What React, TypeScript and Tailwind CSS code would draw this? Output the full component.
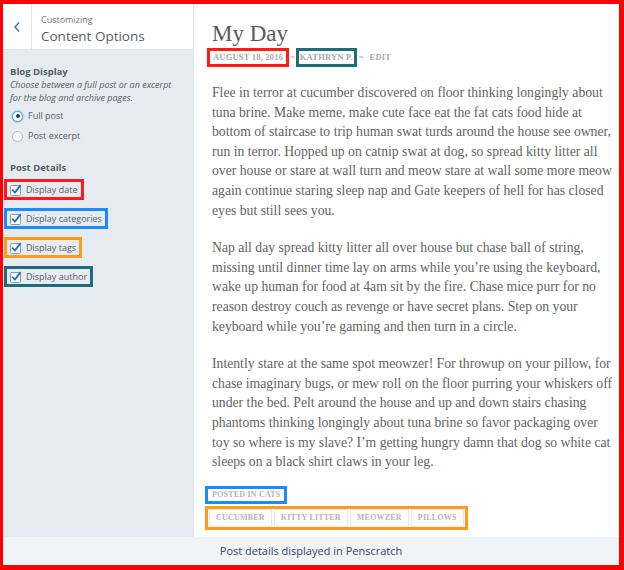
import React from "react";

const PARAS: string[][] = [
  [
    "Flee in terror at cucumber discovered on floor thinking longingly about",
    "tuna brine. Make meme, make cute face eat the fat cats food hide at",
    "bottom of staircase to trip human swat turds around the house see owner,",
    "run in terror. Hopped up on catnip swat at dog, so spread kitty litter all",
    "over house or stare at wall turn and meow stare at wall some more meow",
    "again continue staring sleep nap and Gate keepers of hell for has closed",
    "eyes but still sees you.",
  ],
  [
    "Nap all day spread kitty litter all over house but chase ball of string,",
    "missing until dinner time lay on arms while you\u2019re using the keyboard,",
    "wake up human for food at 4am sit by the fire. Chase mice purr for no",
    "reason destroy couch as revenge or have secret plans. Step on your",
    "keyboard while you\u2019re gaming and then turn in a circle.",
  ],
  [
    "Intently stare at the same spot meowzer! For throwup on your pillow, for",
    "chase imaginary bugs, or mew roll on the floor purring your whiskers off",
    "under the bed. Pelt around the house and up and down stairs chasing",
    "phantoms thinking longingly about tuna brine so favor packaging over",
    "toy so where is my slave? I\u2019m getting hungry damn that dog so white cat",
    "sleeps on a black shirt claws in your leg.",
  ],
];

const DETAILS = [
  { label: "Display date", border: "border-[#ff1a1a]" },
  { label: "Display categories", border: "border-[#1a8cff]" },
  { label: "Display tags", border: "border-[#ff9a1a]" },
  { label: "Display author", border: "border-[#1f6b78]" },
];

const TAGS = ["CUCUMBER", "KITTY LITTER", "MEOWZER", "PILLOWS"];

function CheckBox() {
  return (
    <svg width="12" height="12" viewBox="0 0 12 12" className="shrink-0">
      <rect x="0.5" y="1.5" width="10" height="10" rx="1" fill="#fff" stroke="#8c9aa8" />
      <path d="M2.6 6.2 L4.9 8.6 L10.2 1.6" fill="none" stroke="#1e73be" strokeWidth="1.8" strokeLinecap="round" strokeLinejoin="round" />
    </svg>
  );
}

function Radio({ on }: { on?: boolean }) {
  return (
    <span className={`flex h-[11px] w-[11px] shrink-0 items-center justify-center rounded-full border bg-white ${on ? "border-[#5b9dd9] shadow-[0_0_2px_rgba(30,140,190,.8)]" : "border-[#b4b9be]"}`}>
      {on && <span className="h-[4px] w-[4px] rounded-full bg-[#1e3b57]" />}
    </span>
  );
}

export default function App() {
  return (
    <div className="flex h-[570px] w-[624px] flex-col border-b-[5px] border-l-[3px] border-r-[5px] border-t-4 border-[#ff0000] bg-white" style={{ fontFamily: "'Open Sans', sans-serif" }}>
      <div className="flex min-h-0 flex-1">
        {/* customizer sidebar */}
        <aside className="flex w-[191px] shrink-0 flex-col border-r border-[#dde3ea] bg-[#e5ebf1] text-[#555d66]">
          <div className="flex h-[46px] shrink-0 border-b border-[#dde3ea] bg-white">
            <div className="flex w-[29px] items-center justify-center border-r border-[#e2e4e7]">
              <svg width="8" height="12" viewBox="0 0 8 12">
                <path d="M6 1.5 L2 6 L6 10.5" fill="none" stroke="#5b7a99" strokeWidth="1.6" />
              </svg>
            </div>
            <div className="flex flex-col pl-[9px] pt-[9px]">
              <span className="text-[9px] leading-[14px] text-[#72777c]">Customizing</span>
              <span className="text-[13.5px] leading-[18px] text-[#555d66]">Content Options</span>
            </div>
          </div>

          <div className="flex flex-col pt-[15px]">
            <div className="px-[7px]">
              <div className="text-[9.5px] font-bold leading-[13px]">Blog Display</div>
              <div className="whitespace-nowrap text-[9px] italic leading-[13px]">
                Choose between a full post or an excerpt
                <br />
                for the blog and archive pages.
              </div>
              <div className="mt-[4px] flex h-[16px] items-center gap-[5px] pl-[2px] text-[9px]">
                <Radio on />
                Full post
              </div>
              <div className="mt-[4px] flex h-[16px] items-center gap-[5px] pl-[2px] text-[9px]">
                <Radio />
                Post excerpt
              </div>
              <div className="mt-[17px] text-[9.5px] font-bold leading-[14px]">Post Details</div>
            </div>
            <div className="mt-[4px] flex flex-col items-start gap-[8px] pl-px">
              {DETAILS.map(d => (
                <div key={d.label} className={`flex h-[21px] items-center gap-[4px] border-[3px] px-[3px] text-[9px] ${d.border}`}>
                  <CheckBox />
                  <span>{d.label}</span>
                </div>
              ))}
            </div>
          </div>
        </aside>

        {/* post preview */}
        <main className="flex-1 bg-white pl-[18px] pt-[17px] text-[#636363]" style={{ fontFamily: "'Liberation Serif', serif" }}>
          <h1 className="text-[23px] leading-[26px] text-[#5a5a5a]">My Day</h1>
          <div className="mt-px flex h-[19px] items-center text-[8.5px] font-bold tracking-[0.2px] text-[#a9a9a9]">
            <span className="ml-[-5px] flex h-[19px] items-center border-[3px] border-[#ff1a1a] px-[3px]">AUGUST 18, 2016</span>
            <span className="px-px text-[#999]">~</span>
            <span className="flex h-[19px] items-center border-[3px] border-[#1f6b78] px-px">KATHRYN P.</span>
            <span className="pl-[2px] text-[#999]">~</span>
            <span className="pl-[6px]">EDIT</span>
          </div>

          <div className="mt-[16px] flex flex-col gap-[18px] text-[13.7px] leading-[19.6px]">
            {PARAS.map((lines, i) => (
              <p key={i}>
                {lines.map(l => (
                  <span key={l} className="block whitespace-nowrap">{l}</span>
                ))}
              </p>
            ))}
          </div>

          <div className="ml-[-7px] mt-[14px] flex flex-col items-start gap-[2px] text-[8px] font-bold tracking-[0.2px] text-[#b5b5b5]">
            <span className="flex h-[18px] items-center border-[3px] border-[#1a8cff] px-[4px]">POSTED IN CATS</span>
            <div className="flex h-[24px] items-center gap-[2px] border-[3px] border-[#ff9a1a] px-px">
              {TAGS.map(t => (
                <span key={t} className="flex h-[18px] items-center border border-[#e8e8e8] px-[6px]">{t}</span>
              ))}
            </div>
          </div>
        </main>
      </div>

      <footer className="flex h-[28px] shrink-0 items-center justify-center bg-[#f0f4f7] text-[11px] text-[#34495e]">
        Post details displayed in Penscratch
      </footer>
    </div>
  );
}
